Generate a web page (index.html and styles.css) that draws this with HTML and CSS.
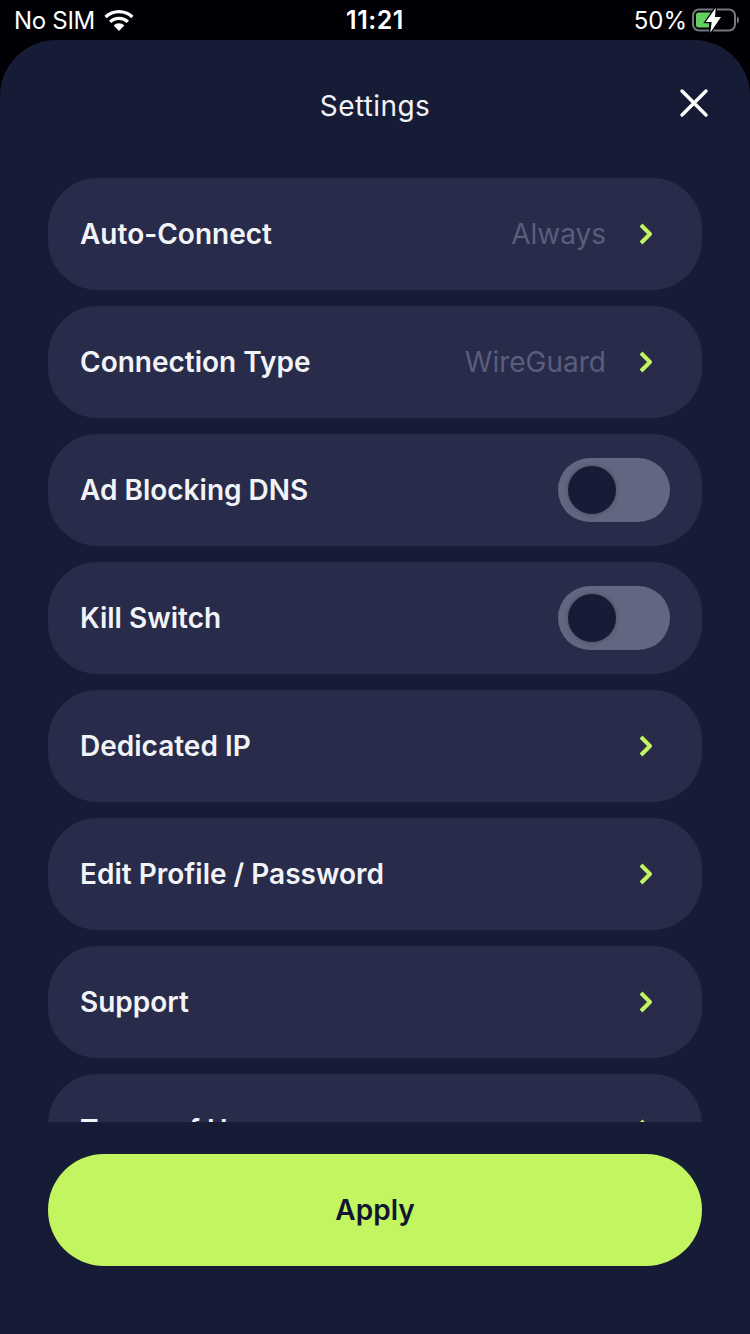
FILE: index.html
```html
<!DOCTYPE html>
<html lang="en">
<head>
<meta charset="utf-8">
<title>Settings</title>
<link rel="stylesheet" href="styles.css">
</head>
<body>
<svg class="defs" width="0" height="0" aria-hidden="true">
  <symbol id="chev" viewBox="0 0 14 22"><path d="M2 2 L11 11 L2 20" fill="none" stroke="#c2f55f" stroke-width="4" stroke-linejoin="round"/></symbol>
</svg>
<div class="phone">
  <header class="status">
    <div class="status-left">
      <span>No SIM</span>
      <svg class="wifi" width="30" height="21" viewBox="1.500 0.500 27 19.500"><path d="M15 3.600c4.400 0 8.400 1.700 11.400 4.500l2.100-2.200C24.900 2.500 20.200.5 15 .5S5.100 2.500 1.500 5.900l2.100 2.200C6.600 5.300 10.600 3.600 15 3.600z" fill="#fff"/><path d="M15 9.800c2.700 0 5.200 1 7.100 2.800l2.200-2.200C21.800 8.100 18.600 6.700 15 6.700s-6.800 1.400-9.300 3.700l2.200 2.200c1.900-1.800 4.400-2.800 7.100-2.800z" fill="#fff"/><path d="M15 12.900c-1.900 0-3.600.7-4.900 1.900l4.900 5.200 4.900-5.200c-1.300-1.200-3-1.900-4.900-1.900z" fill="#fff"/></svg>
    </div>
    <div class="status-time">11:21</div>
    <div class="status-right">
      <span>50%</span>
      <svg class="battery" width="48" height="26" viewBox="0 0 48 26"><rect x="1" y="2.500" width="42" height="21" rx="6" fill="none" stroke="#77787c" stroke-width="2"/><path d="M45 9.500c1.300.5 2 1.800 2 3.500s-.7 3-2 3.500z" fill="#77787c"/><path d="M6.500 5.500H21L12 15.500h5v5H6.500a2.500 2.500 0 0 1-2.500-2.500V8a2.500 2.500 0 0 1 2.500-2.500z" fill="#62d060"/><path class="bolt" d="M23.700 .7 L13.700 15 H19.700 L18.300 25.700 L29 10 H23 Z"/></svg>
    </div>
  </header>
  <main class="sheet">
    <div class="topbar">
      <h1 class="title">Settings</h1>
      <button class="close" aria-label="Close">
        <svg width="30" height="30" viewBox="0 0 30 30"><path d="M3 3 L27 27 M27 3 L3 27" stroke="#fff" stroke-width="3.400" stroke-linecap="round"/></svg>
      </button>
    </div>
    <div class="list">
      <div class="row"><span class="label">Auto-Connect</span><span class="value">Always</span><svg class="chev"><use href="#chev"/></svg></div>
      <div class="row"><span class="label">Connection Type</span><span class="value">WireGuard</span><svg class="chev"><use href="#chev"/></svg></div>
      <div class="row"><span class="label">Ad Blocking DNS</span><span class="toggle"><span class="knob"></span></span></div>
      <div class="row"><span class="label">Kill Switch</span><span class="toggle"><span class="knob"></span></span></div>
      <div class="row"><span class="label">Dedicated IP</span><svg class="chev"><use href="#chev"/></svg></div>
      <div class="row"><span class="label">Edit Profile / Password</span><svg class="chev"><use href="#chev"/></svg></div>
      <div class="row"><span class="label">Support</span><svg class="chev"><use href="#chev"/></svg></div>
      <div class="row"><span class="label">Terms of Use</span><svg class="chev"><use href="#chev"/></svg></div>
    </div>
    <div class="footer"><button class="apply">Apply</button></div>
  </main>
</div>
</body>
</html>
```
FILE: styles.css
```css
* { box-sizing: border-box; }
html, body { margin: 0; padding: 0; }
body { background: #000005; font-family: Inter, "Liberation Sans", sans-serif; }
.defs { display: block; height: 0; }
.phone { width: 750px; height: 1334px; display: flex; flex-direction: column; overflow: hidden; }
.status { height: 40px; flex: none; display: grid; grid-template-columns: 1fr auto 1fr; align-items: center; padding: 0 14px; color: #fff; font-size: 24px; }
.status-left { display: flex; align-items: center; gap: 9px; letter-spacing: -0.3px; }
.status-time { font-weight: 600; font-size: 25px; letter-spacing: 0.5px; }
.status-right { display: flex; align-items: center; justify-content: flex-end; gap: 5px; margin-right: -4px; }
.wifi, .battery { display: block; }
.bolt { fill: #fff; stroke: #000005; stroke-width: 2.500px; paint-order: stroke; }
.sheet { flex: 1; min-height: 0; background: #171c36; border-radius: 56px 56px 0 0; display: flex; flex-direction: column; padding: 0 48px 68px; }
.topbar { height: 138px; flex: none; position: relative; display: flex; justify-content: center; padding-top: 48px; }
.title { margin: 0; font-size: 28px; line-height: 36px; font-weight: 400; letter-spacing: 0.4px; color: #f2f3f7; }
.close { position: absolute; right: -7px; top: 48px; padding: 0; border: 0; background: none; width: 30px; height: 30px; }
.close svg { display: block; }
.list { flex: 1; min-height: 0; overflow: hidden; display: flex; flex-direction: column; gap: 16px; }
.row { flex: none; height: 112px; background: #282b4a; border-radius: 50px; display: flex; align-items: center; padding: 0 32px; }
.label { flex: 1; font-size: 28px; font-weight: 570; color: #f2f3f7; }
.value { font-size: 28px; color: #5a5d7c; margin-right: 33px; }
.chev { width: 14px; height: 22px; margin-right: 17px; display: block; }
.toggle { width: 112px; height: 64px; border-radius: 32px; background: #636680; padding: 8px 10px; display: block; }
.knob { display: block; width: 48px; height: 48px; border-radius: 50%; background: #171c36; box-shadow: 0 0 4px rgba(0,0,0,.3); }
.footer { flex: none; padding-top: 32px; }
.apply { display: block; width: 100%; height: 112px; border: 0; border-radius: 56px; background: #c2f55f; color: #111530; font-family: inherit; font-size: 28px; font-weight: 570; }
```
